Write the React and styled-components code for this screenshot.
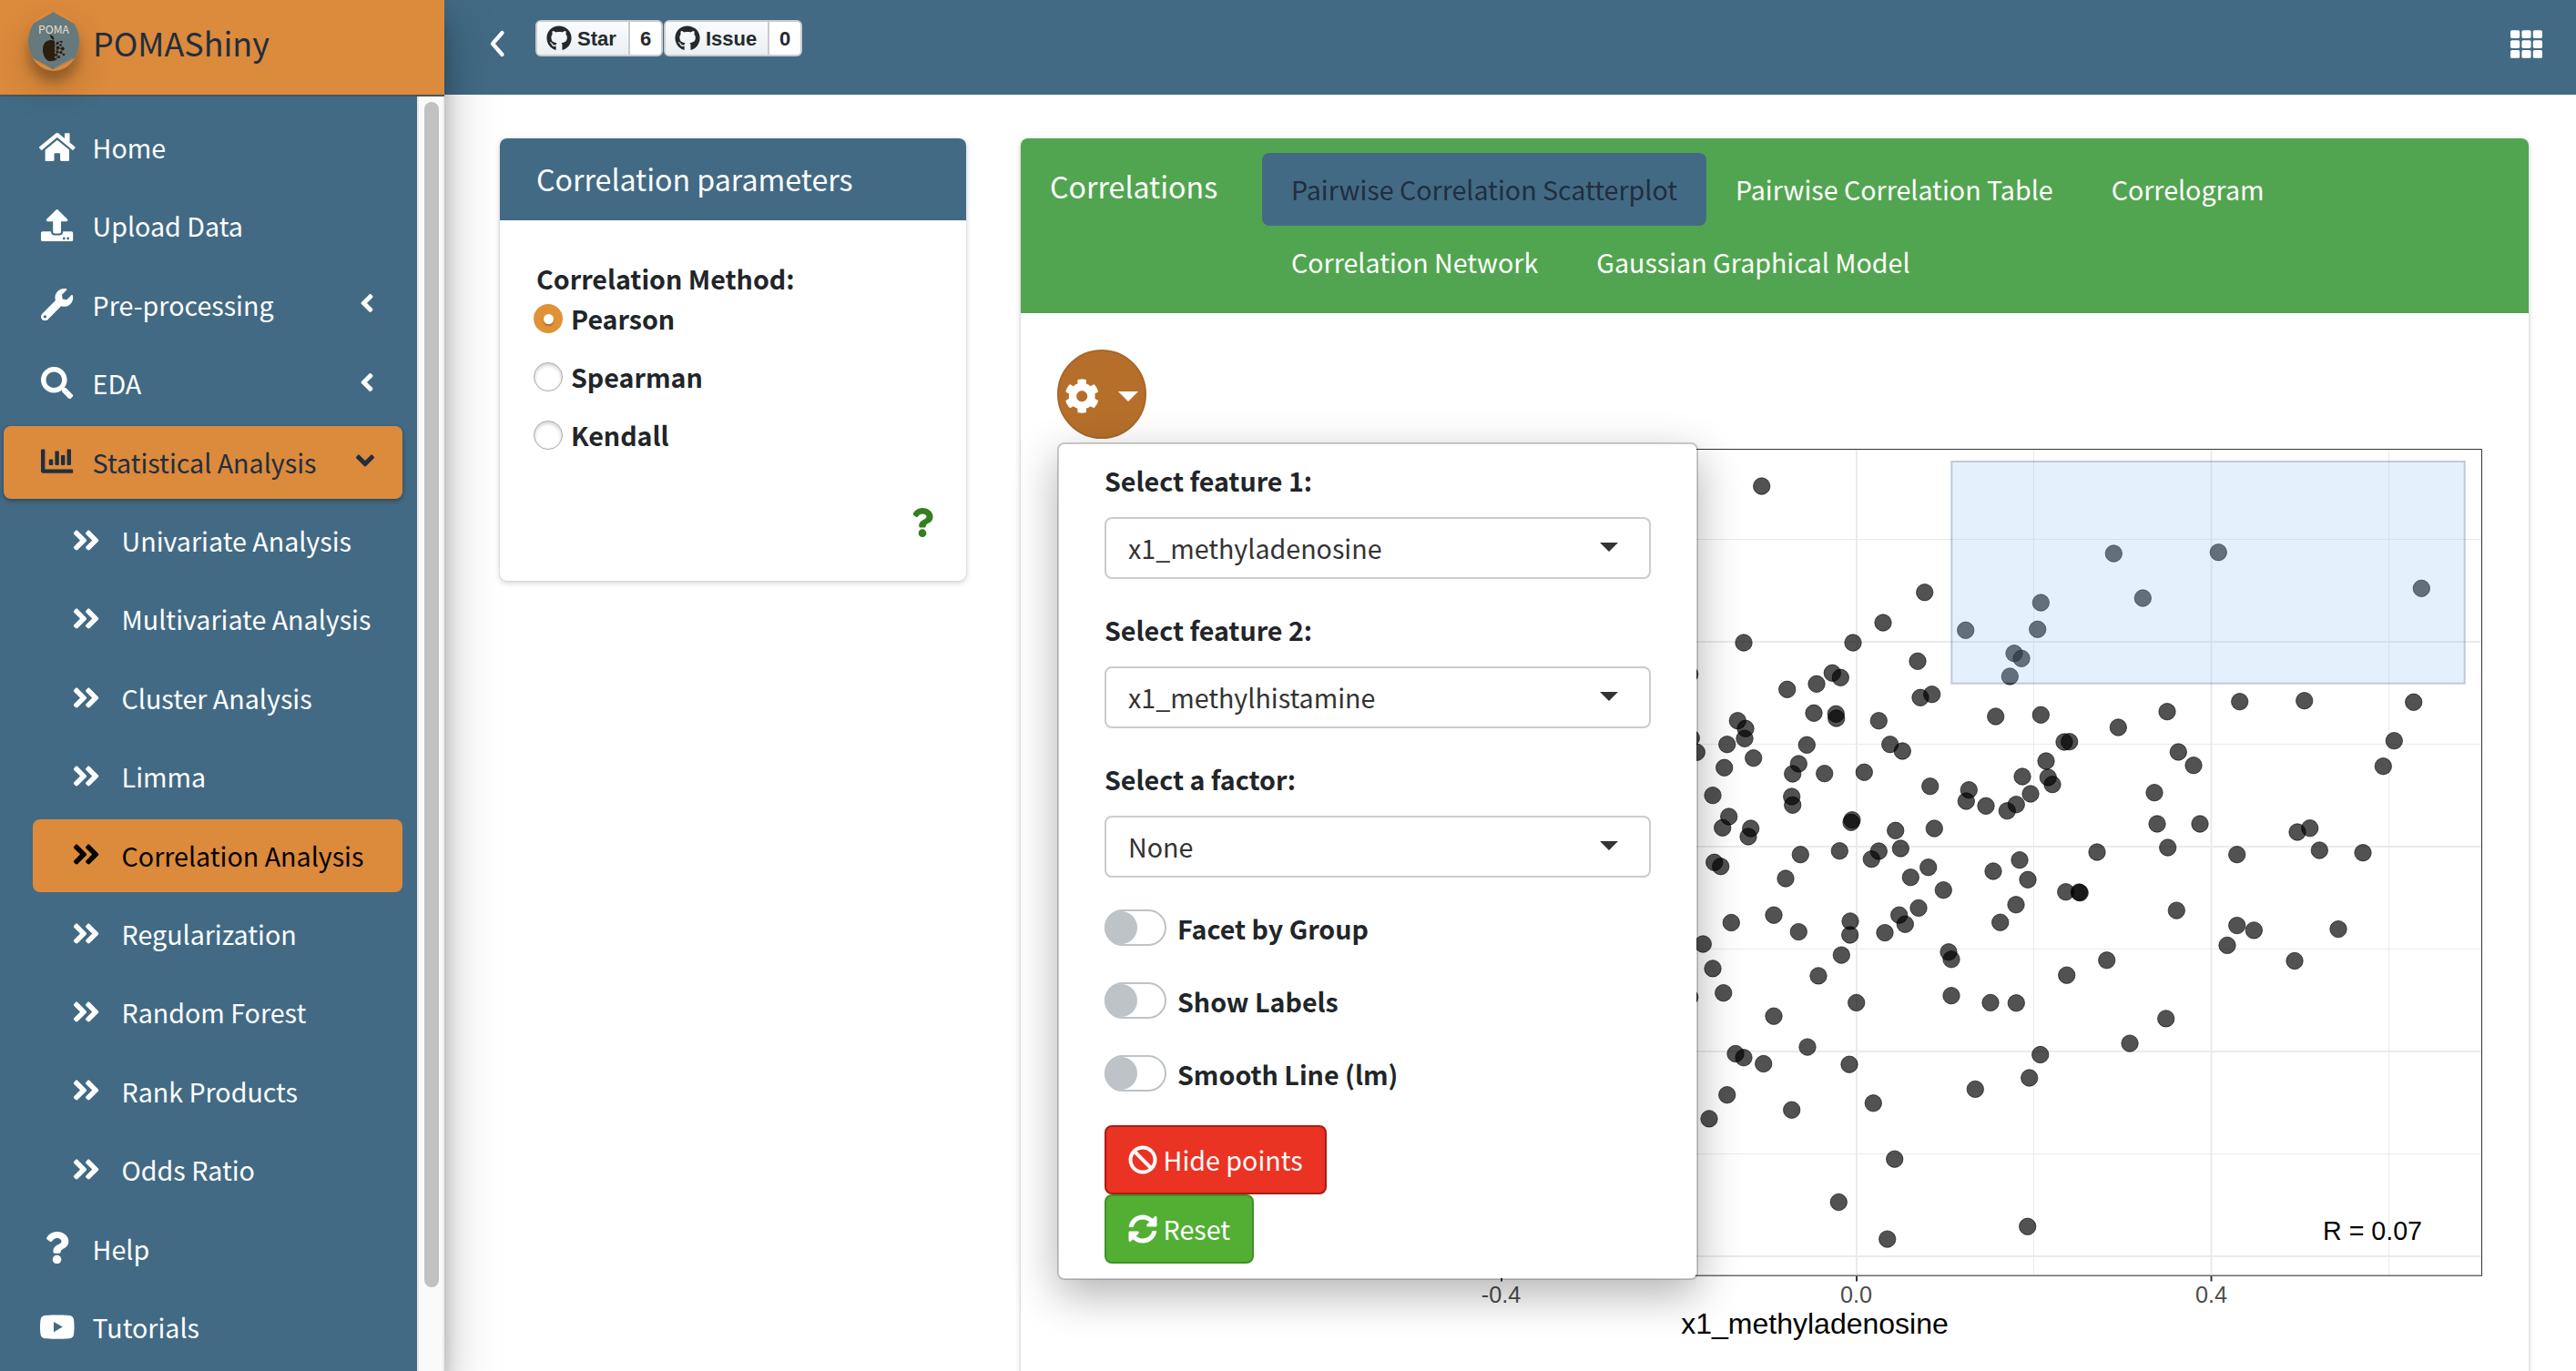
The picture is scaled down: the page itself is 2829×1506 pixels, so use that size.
import React from "react";
import styled, { createGlobalStyle, css } from "styled-components";
import {
  FaHome,
  FaUpload,
  FaWrench,
  FaSearch,
  FaChartBar,
  FaQuestion,
  FaYoutube,
  FaAngleLeft,
  FaAngleDown,
  FaAngleDoubleRight,
  FaTh,
  FaCog,
  FaBan,
  FaSyncAlt,
  FaGithub,
} from "react-icons/fa";

const SANS = '"Noto Sans CJK SC", "Noto Sans", sans-serif';
const ARIAL = '"Liberation Sans", Arial, sans-serif';
const BLUE = "#426a84";
const ORANGE = "#dc8a3c";
const GREEN = "#52a550";
const DARK = "#212e3e";

const GlobalStyle = createGlobalStyle`
  *, *::before, *::after { box-sizing: border-box; }
  body { margin: 0; background: #fff; }
`;

const Page = styled.div`
  display: grid;
  grid-template-columns: 488px 1fr;
  width: 2829px;
  height: 1506px;
  overflow: hidden;
  background: #fff;
  font-family: ${SANS};
  font-size: 28.63px;
  line-height: 46px;
  color: #212529;
`;

/* Sidebar */

const Sidebar = styled.aside`
  position: relative;
  z-index: 2;
  display: flex;
  flex-direction: column;
  height: 1506px;
  background: ${BLUE};
  box-shadow: 0 28px 56px rgba(0, 0, 0, 0.25), 0 20px 20px rgba(0, 0, 0, 0.22);
`;

const Brand = styled.div`
  display: flex;
  align-items: flex-start;
  gap: 15px;
  flex: none;
  height: 106px;
  padding: 13px 0 0 31px;
  background: ${ORANGE};
  border-bottom: 2px solid #4b545c;
`;

const LogoFrame = styled.div`
  width: 56px;
  height: 65px;
  border-radius: 50%;
  overflow: visible;
  box-shadow: 0 20px 40px rgba(0, 0, 0, 0.19), 0 12px 12px rgba(0, 0, 0, 0.23);
  background: ${ORANGE};

  svg {
    display: block;
    border-radius: 50%;
  }
`;

const BrandText = styled.span`
  font-size: 35.9px;
  line-height: 66px;
  color: ${DARK};
`;

const SidebarBody = styled.div`
  display: flex;
  flex: 1;
  min-height: 0;
`;

const Nav = styled.nav`
  display: flex;
  flex-direction: column;
  gap: 6.4px;
  width: 458px;
  padding: 16.4px 16px 0 4px;
`;

const NavItem = styled.a`
  display: flex;
  align-items: flex-start;
  flex: none;
  height: 80px;
  margin-left: ${(p) => (p.$sub ? 32 : 0)}px;
  padding: 16px 31px 16px 32px;
  border-radius: 8px;
  color: ${(p) => (p.$tone === "parent" ? DARK : p.$tone === "current" ? "#000" : "#fff")};
  ${(p) =>
    p.$tone &&
    css`
      background: ${ORANGE};
    `}
  ${(p) =>
    p.$tone === "parent" &&
    css`
      box-shadow: 0 2px 6px rgba(0, 0, 0, 0.12), 0 2px 4px rgba(0, 0, 0, 0.24);
    `}
`;

const NavIcon = styled.span`
  display: flex;
  align-items: center;
  justify-content: center;
  width: 54px;
  height: 46px;
  margin-right: 11.6px;
  font-size: 35.2px;

  svg {
    flex: none;
    width: ${(p) => p.$ratio || 1}em;
    height: 1em;
  }
`;

const NavLabel = styled.span`
  flex: 1;
  margin-top: 0.7px;
  white-space: nowrap;
`;

const NavCaret = styled.span`
  display: flex;
  align-items: center;
  height: 44px;
  font-size: 32px;

  svg {
    flex: none;
    width: ${(p) => p.$ratio}em;
    height: 1em;
  }
`;

const ScrollTrack = styled.div`
  width: 30px;
  padding: 6px 6px 0 8px;
  background: #fafafa;
  border-left: 2px solid #e8e8e8;
  border-right: 2px solid #ededed;
`;

const ScrollThumb = styled.div`
  width: 16px;
  height: 1302px;
  margin-left: -2px;
  border-radius: 8px;
  background: #c1c1c1;
`;

/* Top bar */

const Main = styled.div`
  display: flex;
  flex-direction: column;
  min-width: 0;
`;

const TopBar = styled.header`
  display: flex;
  align-items: flex-start;
  flex: none;
  height: 104px;
  padding: 22px 37px 0 49px;
  background: ${BLUE};
  color: #fff;
`;

const BackIcon = styled.svg`
  width: 18px;
  height: 30px;
  margin: 11px 33px 0 0;
`;

const GithubBadge = styled.div`
  display: flex;
  height: 40px;
  width: ${(p) => p.$width}px;
  margin-right: 1px;
  border: 2px solid #c9cbcd;
  border-radius: 6px;
  background: #fff;
  font: bold 22px/37px ${ARIAL};
  color: #24292e;
  overflow: hidden;
`;

const BadgeAction = styled.span`
  display: flex;
  align-items: center;
  gap: 6px;
  width: ${(p) => p.$width}px;
  padding-left: 10px;
  border-right: 2px solid #c9cbcd;
  background: linear-gradient(180deg, #fafbfc, #ebf0f4);

  svg {
    width: 28px;
    height: 28px;
  }
`;

const BadgeCount = styled.span`
  flex: 1;
  text-align: center;
`;

const GridIcon = styled.span`
  display: flex;
  margin: 9px 0 0 auto;
  font-size: 35px;
`;

/* Cards */

const Content = styled.main`
  display: flex;
  align-items: flex-start;
  gap: 60px;
  padding: 48px 52px 0 61px;
`;

const Card = styled.section`
  width: ${(p) => p.$width}px;
  height: ${(p) => p.$height}px;
  border-radius: 8px;
  background: #fff;
  box-shadow: 0 0 2px rgba(0, 0, 0, 0.125), 0 2px 6px rgba(0, 0, 0, 0.2);
`;

const ParamHeader = styled.header`
  height: 90px;
  padding: 19px 40px 0;
  border-radius: 8px 8px 0 0;
  background: ${BLUE};
  color: #fff;
  font-size: 32.15px;
  line-height: 50px;
`;

const ParamBody = styled.div`
  display: flex;
  flex-direction: column;
  padding: 40px 36px 0 37px;
`;

const GroupLabel = styled.strong`
  padding: 0 0 0 3px;
  line-height: 48px;
`;

const RadioRow = styled.label`
  display: flex;
  align-items: center;
  gap: 9px;
  height: 32px;
  margin: ${(p) => (p.$first ? "4px" : "32px")} 0 0;
  font-weight: bold;
  line-height: 32px;
`;

const RadioMark = styled.span`
  display: flex;
  align-items: center;
  justify-content: center;
  width: 32px;
  height: 32px;
  border-radius: 50%;
  border: ${(p) => (p.$on ? "2px solid #df9339" : "1px solid #a9a9a9")};
  background: ${(p) => (p.$on ? "#df9339" : "#fff")};
  box-shadow: ${(p) => (p.$on ? "none" : "inset 0 2px 4px rgba(0, 0, 0, 0.2)")};

  &::after {
    content: "";
    display: ${(p) => (p.$on ? "block" : "none")};
    width: 11px;
    height: 11px;
    border-radius: 50%;
    background: #fff;
    box-shadow: 0 2px 2px rgba(0, 0, 0, 0.25);
  }
`;

const HelpMark = styled.span`
  display: flex;
  align-self: flex-end;
  margin-top: 64px;
  font-size: 32px;
  color: #357f20;

  svg {
    width: 0.75em;
    height: 1em;
  }
`;

const TabHeader = styled.header`
  display: flex;
  height: 192px;
  padding: 16px 0 0 32px;
  border-radius: 8px 8px 0 0;
  background: ${GREEN};
  color: #fff;
`;

const TabTitle = styled.h3`
  width: 233px;
  margin: 0;
  font-size: 32.15px;
  font-weight: normal;
  line-height: 73px;
`;

const TabList = styled.div`
  display: flex;
  flex-wrap: wrap;
  align-content: flex-start;
  width: 1200px;
`;

const Tab = styled.a`
  height: 80px;
  padding: 17px 32px 15px;
  border-radius: 8px;
  white-space: nowrap;
  background: ${(p) => (p.$active ? BLUE : "transparent")};
  color: ${(p) => (p.$active ? DARK : "#fff")};
`;

const TabBody = styled.div`
  position: relative;
  padding: 40px;
`;

const GearButton = styled.button`
  display: flex;
  align-items: center;
  justify-content: flex-start;
  gap: 21px;
  width: 98px;
  height: 98px;
  padding: 4px 0 0 6px;
  border: 2px solid #a9662a;
  border-radius: 50%;
  background: #b66f2b;
  color: #fff;
  font-size: 38.4px;
`;

const Caret = styled.span`
  margin-top: ${(p) => p.$lift || 0}px;
  border-left: ${(p) => p.$size}px solid transparent;
  border-right: ${(p) => p.$size}px solid transparent;
  border-top: ${(p) => p.$size}px solid currentColor;
`;

const Plot = styled.svg`
  display: block;
  width: 1576px;
  height: 1024px;
`;

/* Settings menu */

const Menu = styled.div`
  position: absolute;
  top: 142px;
  left: 40px;
  z-index: 1;
  display: flex;
  flex-direction: column;
  align-items: flex-start;
  width: 704px;
  height: 920px;
  padding: 17px 50px 0;
  border: 2px solid rgba(0, 0, 0, 0.2);
  border-radius: 8px;
  background: #fff;
  background-clip: padding-box;
  box-shadow: 0 16px 48px rgba(0, 0, 0, 0.3);
`;

const FieldLabel = styled.label`
  height: 47px;
  font-weight: bold;
`;

const Select = styled.div`
  display: flex;
  align-items: flex-start;
  justify-content: space-between;
  width: 600px;
  height: 68px;
  margin: 16px 0 33px;
  padding: 9px 34px 0 24px;
  border: 2px solid #ccc;
  border-radius: 8px;
  color: #333;
`;

const SwitchRow = styled.label`
  display: flex;
  align-items: flex-start;
  gap: 12px;
  height: 40px;
  margin: ${(p) => (p.$first ? "2px" : "0")} 0 40px;
  font-weight: bold;
  line-height: 42px;
`;

const SwitchTrack = styled.span`
  width: 68px;
  height: 40px;
  border: 2px solid #bdc3c7;
  border-radius: 20px;
  background: #fff;

  &::before {
    content: "";
    display: block;
    width: 36px;
    height: 36px;
    margin-left: -2px;
    border-radius: 50%;
    background: #bdc3c7;
  }
`;

const ActionButton = styled.button`
  display: flex;
  align-items: center;
  gap: 6.6px;
  height: 76px;
  width: ${(p) => p.$width}px;
  margin-top: ${(p) => p.$top || 0}px;
  padding: 0 0 0 24px;
  border: 2px solid ${(p) => p.$edge};
  border-radius: 8px;
  background: ${(p) => p.$fill};
  color: #fff;
  font: 28.63px/46px ${SANS};

  svg {
    font-size: 32px;
  }
`;

const NAV = [
  { label: "Home", icon: FaHome, ratio: 1.125 },
  { label: "Upload Data", icon: FaUpload },
  { label: "Pre-processing", icon: FaWrench, caret: FaAngleLeft, caretRatio: 0.5 },
  { label: "EDA", icon: FaSearch, caret: FaAngleLeft, caretRatio: 0.5 },
  { label: "Statistical Analysis", icon: FaChartBar, caret: FaAngleDown, caretRatio: 0.625, tone: "parent" },
  { label: "Univariate Analysis", sub: true },
  { label: "Multivariate Analysis", sub: true },
  { label: "Cluster Analysis", sub: true },
  { label: "Limma", sub: true },
  { label: "Correlation Analysis", sub: true, tone: "current" },
  { label: "Regularization", sub: true },
  { label: "Random Forest", sub: true },
  { label: "Rank Products", sub: true },
  { label: "Odds Ratio", sub: true },
  { label: "Help", icon: FaQuestion },
  { label: "Tutorials", icon: FaYoutube, ratio: 1.125 },
];

const TABS = [
  "Pairwise Correlation Scatterplot",
  "Pairwise Correlation Table",
  "Correlogram",
  "Correlation Network",
  "Gaussian Graphical Model",
];

const FIELDS = [
  ["Select feature 1:", "x1_methyladenosine"],
  ["Select feature 2:", "x1_methylhistamine"],
  ["Select a factor:", "None"],
];

const POINTS = [
  [1934.7, 534], [2321.3, 608], [2113.7, 650.7], [2068, 684], [2241.3, 662], [2158.7, 692.3],
  [2237.7, 691.3], [1915, 706], [2035, 706], [2212, 717.7], [2220, 723.3], [2106, 726.3],
  [2207.3, 743], [2012.3, 739.3], [2021.3, 744.3], [1995, 751.3], [1962.7, 757.3], [2121.7, 762.7],
  [2109, 766.3], [1855.7, 740.7], [1992, 783.3], [2016.3, 784.3], [2016.7, 789], [2063.3, 791.7],
  [2191.7, 787], [2241.3, 785.3], [2326.3, 799], [1908.3, 791.7], [1917, 800.3], [1916, 811.3],
  [1896.7, 817.7], [1857.3, 810.7], [1863.3, 826.3], [1925.7, 832.7], [1984.3, 818.3], [2075.7, 817.7],
  [2089.3, 825], [2267, 815], [2272.7, 814.7], [1893.7, 843.3], [1975.3, 839], [1968.7, 850],
  [2003.7, 849.7], [2047.3, 848.3], [2247, 836], [2221, 853], [2249.3, 854], [2254, 861.7],
  [2119.7, 863.7], [2162.3, 867.7], [2159.3, 880], [2230, 872], [2181, 885.3], [2214.3, 883.7],
  [2204.3, 890.7], [1881, 873.7], [1967.7, 875], [1968.7, 884.3], [1898.7, 897], [1891.7, 909.3],
  [1922.7, 910], [1920, 919], [2033, 903.3], [2034, 900.7], [2081.7, 912.3], [2124.3, 910],
  [2087.3, 932], [2063.3, 935], [2055.3, 943.7], [2020.3, 934.7], [1977.3, 938.7], [2303, 936],
  [2218, 944.7], [1882.7, 947.3], [1889.7, 951.7], [2117.7, 952.7], [2189, 957], [1961, 965],
  [2098.3, 963.7], [2227, 966.3], [2134.3, 977.7], [2268.7, 979.7], [2283.3, 980], [2284.2, 980.7],
  [2436.3, 606.7], [2353.3, 657], [2659.3, 646.3], [2459.7, 770.7], [2530.7, 769.7], [2650.7, 771.3],
  [2380, 781.7], [2629.3, 813.7], [2617.3, 841.7], [2392.3, 826], [2409, 840.7], [2366, 870.7],
  [2369, 905], [2416, 905], [2536.7, 909.7], [2523, 914], [2380.7, 931], [2456.7, 938.7],
  [2547.3, 934], [2595, 936.7], [1948, 1005.2], [1901.3, 1013.5], [1975.3, 1023.6], [2032, 1011.9],
  [2031.7, 1027], [2085.7, 1005.2], [2107, 997.4], [2092.3, 1015.2], [2070, 1024.6], [2214, 993.8],
  [2196.7, 1013.2], [1870.3, 1037], [2022.3, 1049.1], [2140, 1045.8], [2143, 1053.8], [1881, 1063.9],
  [1997, 1071.9], [2269.7, 1071.2], [2313.7, 1054.8], [1892.7, 1090.7], [1855.7, 1095.4], [2038.7, 1101.4],
  [2143, 1093.7], [2186, 1101.4], [2214.3, 1101.8], [1948, 1116.2], [1985, 1150.1], [1906, 1157.5],
  [1915, 1161.8], [1936.7, 1168.5], [2031, 1169.2], [2240.7, 1158.5], [2228.7, 1184], [1896.7, 1202.7],
  [2169.3, 1196.4], [2057.3, 1211.8], [1967.7, 1219.2], [1877, 1228.9], [2080.7, 1273.2], [2019.3, 1320.5],
  [2226.7, 1347.3], [2072.7, 1361.1], [2390.3, 1000.1], [2456.7, 1016.6], [2475.3, 1021.9], [2446, 1038.4],
  [2568, 1020.6], [2520, 1055.5], [2378.7, 1118.9], [2339, 1146.1],
];

function Logo() {
  return (
    <LogoFrame>
      <svg width="56" height="65" viewBox="0 0 56 65">
        <path d="M27.5 .3L56 16V48L27.5 63.5L0 48V16Z" fill="#66797c" />
        <path d="M28 62.5L48 51" stroke="#8a8f88" strokeWidth="1" />
        <text x="11" y="23.5" fontSize="12.2" fill="#e6ddd0" fontFamily={SANS} textLength="34" lengthAdjust="spacingAndGlyphs">
          POMA
        </text>
        <path d="M29 32C26 30.200 20 30.500 17.500 35C14 41 17 51 21.500 53.500C24 55 26 53.300 29 53.800Z" fill="#2d1d0f" />
        <path d="M24 25C27.500 26 29 28.500 28 31C25 30 24 28 24 25Z" fill="#2d1d0f" />
        <g fill="#2d1d0f" stroke="#2d1d0f" strokeWidth=".6">
          <path d="M29 38L32 34L36 32M29 43L34 40L37.500 40.500M29 47L33 44L39 47M30 51L34 50" fill="none" />
          <circle cx="32" cy="34.500" r="1.300" />
          <circle cx="36.500" cy="33" r=".9" />
          <circle cx="32.500" cy="39.500" r="1.700" />
          <circle cx="37.700" cy="40.500" r="1.700" />
          <circle cx="35.500" cy="36.500" r="1" />
          <circle cx="32" cy="44" r="1.300" />
          <circle cx="36" cy="44.500" r="1.200" />
          <circle cx="39" cy="47" r="1" />
          <circle cx="33.500" cy="49.500" r="1.200" />
          <circle cx="30.500" cy="47.500" r="1.300" />
          <circle cx="30" cy="52" r=".9" />
        </g>
      </svg>
    </LogoFrame>
  );
}

function ScatterPlot() {
  return (
    <Plot viewBox="1161 482 1576 1024">
      <g stroke="#ebebeb" strokeWidth="1">
        {[592.5, 817.5, 1042.5, 1267.5].map((y) => (
          <line key={y} x1="1250" x2="2725" y1={y} y2={y} />
        ))}
        {[1844, 2233.5, 2623.5].map((x) => (
          <line key={x} x1={x} x2={x} y1="493" y2="1401" />
        ))}
      </g>
      <g stroke="#ebebeb" strokeWidth="2">
        {[705, 930, 1155, 1380].map((y) => (
          <line key={y} x1="1250" x2="2725" y1={y} y2={y} />
        ))}
        {[1649, 2039, 2428.5].map((x) => (
          <line key={x} x1={x} x2={x} y1="493" y2="1401" />
        ))}
      </g>
      <g fill="#000" fillOpacity=".68" stroke="#000" strokeOpacity=".6" strokeWidth="1">
        {POINTS.map(([x, y], i) => (
          <circle key={i} cx={x} cy={y} r="9.2" />
        ))}
      </g>
      <path d="M1250.5 1401.3V493.5H2725.5V1401.3" fill="none" stroke="#333" strokeWidth="1" />
      <path d="M1250 1401.2H2726" stroke="#6a6a6a" strokeWidth="1.4" />
      <path d="M1649 1402V1407.5M2039 1402V1407.5M2428.5 1402V1407.5" stroke="#333" strokeWidth="2" />
      <g opacity=".25">
        <rect x="2142.3" y="506" width="565.4" height="245.7" fill="#032b6f" />
        <rect x="2144.3" y="508" width="561.4" height="241.7" fill="#9bc7fb" />
      </g>
      <g fontFamily={ARIAL} textAnchor="middle">
        <g fontSize="25.2" fill="#4d4d4d">
          <text x="1648.5" y="1431">-0.4</text>
          <text x="2038.5" y="1431">0.0</text>
          <text x="2428.5" y="1431">0.4</text>
        </g>
        <text x="1993" y="1464.5" fontSize="32" fill="#000">
          x1_methyladenosine
        </text>
        <text x="2605.5" y="1362" fontSize="28.6" fill="#000">
          R = 0.07
        </text>
      </g>
    </Plot>
  );
}

export default function App() {
  return (
    <Page>
      <GlobalStyle />
      <Sidebar>
        <Brand>
          <Logo />
          <BrandText>POMAShiny</BrandText>
        </Brand>
        <SidebarBody>
          <Nav>
            {NAV.map(({ label, icon, ratio, caret, caretRatio, sub, tone }) => {
              const Icon = icon || FaAngleDoubleRight;
              const CaretIcon = caret;
              return (
                <NavItem key={label} $sub={sub} $tone={tone}>
                  <NavIcon $ratio={ratio}>
                    <Icon />
                  </NavIcon>
                  <NavLabel>{label}</NavLabel>
                  {CaretIcon && (
                    <NavCaret $ratio={caretRatio}>
                      <CaretIcon />
                    </NavCaret>
                  )}
                </NavItem>
              );
            })}
          </Nav>
          <ScrollTrack>
            <ScrollThumb />
          </ScrollTrack>
        </SidebarBody>
      </Sidebar>

      <Main>
        <TopBar>
          <BackIcon viewBox="0 0 18 30">
            <path d="M14.5 3L4 15L14.5 27" fill="none" stroke="#fff" strokeWidth="4.2" strokeLinecap="round" strokeLinejoin="round" />
          </BackIcon>
          <GithubBadge $width={140}>
            <BadgeAction $width={102}>
              <FaGithub />
              Star
            </BadgeAction>
            <BadgeCount>6</BadgeCount>
          </GithubBadge>
          <GithubBadge $width={152}>
            <BadgeAction $width={114}>
              <FaGithub />
              Issue
            </BadgeAction>
            <BadgeCount>0</BadgeCount>
          </GithubBadge>
          <GridIcon>
            <FaTh />
          </GridIcon>
        </TopBar>

        <Content>
          <Card $width={512} $height={486}>
            <ParamHeader>Correlation parameters</ParamHeader>
            <ParamBody>
              <GroupLabel>Correlation Method:</GroupLabel>
              {["Pearson", "Spearman", "Kendall"].map((name, i) => (
                <RadioRow key={name} $first={i === 0}>
                  <RadioMark $on={i === 0} />
                  {name}
                </RadioRow>
              ))}
              <HelpMark>
                <FaQuestion />
              </HelpMark>
            </ParamBody>
          </Card>

          <Card $width={1656} $height={1400}>
            <TabHeader>
              <TabTitle>Correlations</TabTitle>
              <TabList>
                {TABS.map((name, i) => (
                  <Tab key={name} $active={i === 0}>
                    {name}
                  </Tab>
                ))}
              </TabList>
            </TabHeader>
            <TabBody>
              <GearButton>
                <FaCog />
                <Caret $size={11.5} />
              </GearButton>
              <ScatterPlot />
              <Menu>
                {FIELDS.map(([label, value]) => (
                  <React.Fragment key={label}>
                    <FieldLabel>{label}</FieldLabel>
                    <Select>
                      {value}
                      <Caret $size={10} $lift={17} />
                    </Select>
                  </React.Fragment>
                ))}
                {["Facet by Group", "Show Labels", "Smooth Line (lm)"].map((name, i) => (
                  <SwitchRow key={name} $first={i === 0}>
                    <SwitchTrack />
                    {name}
                  </SwitchRow>
                ))}
                <ActionButton $width={244} $top={-3} $fill="#eb3323" $edge="#a91c12">
                  <FaBan />
                  Hide points
                </ActionButton>
                <ActionButton $width={164} $fill="#52af33" $edge="#3f9129">
                  <FaSyncAlt />
                  Reset
                </ActionButton>
              </Menu>
            </TabBody>
          </Card>
        </Content>
      </Main>
    </Page>
  );
}
